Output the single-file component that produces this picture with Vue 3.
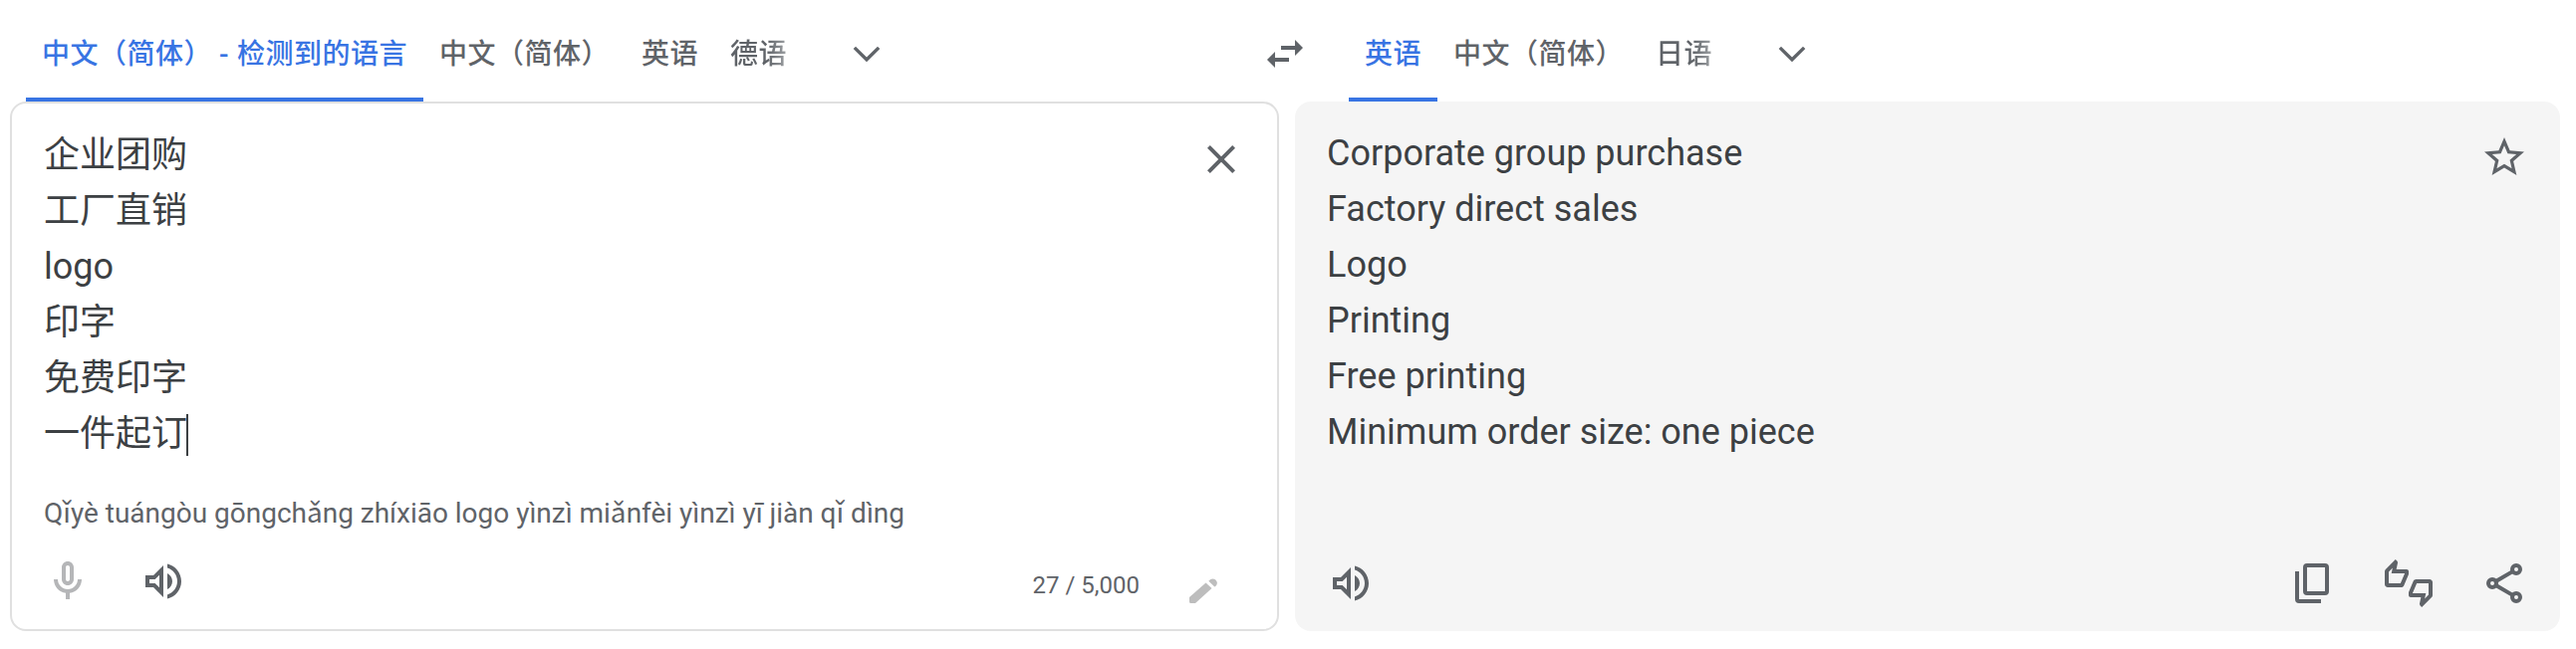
<template>
  <div class="translator">
    <header class="lang-bar">
      <div class="langs langs-source">
        <button class="tab detected active">中文（简体）<span class="dash">-</span>检测到的语言</button>
        <button class="tab tab-zh">中文（简体）</button>
        <button class="tab tab-en">英语</button>
        <button class="tab tab-last">德语</button>
        <svg class="chevron" viewBox="0 0 24 24"><path :d="icons.chevron" /></svg>
      </div>
      <svg class="icon swap" viewBox="0 0 24 24"><path :d="icons.swap" /></svg>
      <div class="langs langs-target">
        <button class="tab active target-en">英语</button>
        <button class="tab target-zh">中文（简体）</button>
        <button class="tab tab-last target-ja">日语</button>
        <svg class="chevron" viewBox="0 0 24 24"><path :d="icons.chevron" /></svg>
      </div>
    </header>

    <main class="panels">
      <section class="panel source">
        <div class="panel-top">
          <div class="lines">
            <p v-for="(line, i) in sourceLines" :key="i">
              {{ line }}<i v-if="i === sourceLines.length - 1" class="caret"></i>
            </p>
          </div>
          <svg class="icon close" viewBox="0 0 24 24"><path :d="icons.close" /></svg>
        </div>
        <p class="pinyin">{{ pinyin }}</p>
        <div class="toolbar">
          <svg class="icon mic" viewBox="0 0 24 24"><path :d="icons.mic" /></svg>
          <svg class="icon speaker" viewBox="0 0 24 24"><path :d="icons.volume" /></svg>
          <span class="counter">27 / 5,000</span>
          <svg class="pencil" viewBox="0 0 28 26">
            <path d="M0 19 16.5 4.5 22.5 10 6 25H1.5Q0 25 0 23.5Z" />
            <path d="M19.3 2.8Q22.5-1 26 1.3 29.5 4.5 26.5 7.8L25.3 8.5Z" />
          </svg>
        </div>
      </section>

      <section class="panel target">
        <div class="panel-top">
          <div class="lines">
            <p v-for="line in targetLines" :key="line">{{ line }}</p>
          </div>
          <svg class="icon star" viewBox="0 0 24 24"><path :d="icons.star" /></svg>
        </div>
        <div class="toolbar">
          <svg class="icon" viewBox="0 0 24 24"><path :d="icons.volume" /></svg>
          <svg class="icon copy" viewBox="0 0 24 24">
            <rect x="8" y="3" width="11" height="14" rx="1" />
            <path d="M4 6v14a1 1 0 0 0 1 1h11" />
          </svg>
          <svg class="icon thumbs" viewBox="0 0 24 24"><path :d="icons.thumbs" /></svg>
          <svg class="icon share" viewBox="0 0 24 24">
            <path d="M8 10.9 16 6.2M8 13.1 16 17.8" />
            <circle cx="18" cy="5" r="2" />
            <circle cx="6" cy="12" r="2" />
            <circle cx="18" cy="19" r="2" />
          </svg>
        </div>
      </section>
    </main>
  </div>
</template>

<script setup>
const sourceLines = ['企业团购', '工厂直销', 'logo', '印字', '免费印字', '一件起订']
const targetLines = [
  'Corporate group purchase',
  'Factory direct sales',
  'Logo',
  'Printing',
  'Free printing',
  'Minimum order size: one piece'
]
const pinyin = 'Qǐyè tuángòu gōngchǎng zhíxiāo logo yìnzì miǎnfèi yìnzì yī jiàn qǐ dìng'

const icons = {
  chevron: 'M5.41 7.59L4 9l8 8 8-8-1.41-1.41L12 14.17z',
  swap: 'M6.99 11L3 15l3.99 4v-3H14v-2H6.99v-3zM21 9l-3.99-4v3H10v2h7.01v3L21 9z',
  close: 'M19 6.41L17.59 5 12 10.59 6.41 5 5 6.41 10.59 12 5 17.59 6.41 19 12 13.41 17.59 19 19 17.59 13.41 12z',
  mic: 'M12 14c1.66 0 3-1.34 3-3V5c0-1.66-1.34-3-3-3S9 3.34 9 5v6c0 1.66 1.34 3 3 3zm-1-9c0-.55.45-1 1-1s1 .45 1 1v6c0 .55-.45 1-1 1s-1-.45-1-1V5zm6 6c0 2.76-2.24 5-5 5s-5-2.24-5-5H5c0 3.53 2.61 6.43 6 6.92V21h2v-3.08c3.39-.49 6-3.39 6-6.92h-2z',
  volume: 'M3 9v6h4l5 5V4L7 9H3zm7-.17v6.34L7.83 13H5v-2h2.83L10 8.83zM16.5 12c0-1.77-1.02-3.29-2.5-4.03v8.05c1.48-.73 2.5-2.25 2.5-4.02zM14 3.23v2.06c2.89.86 5 3.54 5 6.71s-2.11 5.85-5 6.71v2.06c4.01-.91 7-4.49 7-8.77s-2.99-7.86-7-8.77z',
  star: 'M22 9.24l-7.19-.62L12 2 9.19 8.63 2 9.24l5.46 4.73L5.82 21 12 17.27 18.18 21l-1.63-7.03L22 9.24zM12 15.4l-3.76 2.27 1-4.28-3.32-2.88 4.38-.38L12 6.1l1.71 4.04 4.38.38-3.32 2.88 1 4.28L12 15.4z',
  thumbs: 'M12 6c0-.55-.45-1-1-1H5.82l.66-3.18.02-.23c0-.31-.13-.59-.33-.8L5.38 0 .44 4.94C.17 5.21 0 5.59 0 6v6.5c0 .83.67 1.5 1.5 1.5h6.75c.62 0 1.15-.38 1.38-.91l2.26-5.29c.07-.17.11-.36.11-.55V6zm-2 1.13L7.92 12H2V6.21l1.93-1.93L3.36 7H10v.13zM22.5 10h-6.75c-.62 0-1.15.38-1.38.91l-2.26 5.29c-.07.17-.11.36-.11.55V18c0 .55.45 1 1 1h5.18l-.66 3.18-.02.24c0 .31.13.59.33.8l.79.78 4.94-4.94c.27-.27.44-.65.44-1.06v-6.5c0-.83-.67-1.5-1.5-1.5zm-.5 7.79l-1.93 1.93.57-2.72H14v-.13L16.08 12H22v5.79z'
}
</script>

<style>
body {
  margin: 0;
  background: #fff;
}
</style>

<style scoped>
.translator {
  box-sizing: border-box;
  width: 2586px;
  height: 652px;
  padding: 0 16px 18px 10px;
  font-family: Roboto, "Noto Sans CJK SC", sans-serif;
  color: #3c4043;
}
.lang-bar {
  display: flex;
  align-items: flex-start;
  height: 102px;
}
.langs {
  display: flex;
  align-items: flex-start;
}
.langs-source {
  box-sizing: border-box;
  width: 1256px;
  padding-left: 16px;
}
.tab {
  box-sizing: border-box;
  height: 102px;
  padding: 11px 0 0;
  border: 0;
  border-bottom: 4px solid transparent;
  background: none;
  font-family: inherit;
  font-size: 28px;
  font-weight: 500;
  letter-spacing: 0.5px;
  line-height: 87px;
  text-align: left;
  white-space: nowrap;
  color: #5f6368;
}
.tab.active {
  color: #3874e3;
  border-bottom-color: #3874e3;
}
.detected {
  width: 399px;
  padding-left: 16px;
}
.dash {
  display: inline-block;
  box-sizing: border-box;
  width: 25px;
  padding-left: 7px;
}
.tab-zh {
  width: 203px;
  padding-left: 16px;
}
.tab-en {
  width: 105px;
  padding-left: 16px;
}
.tab-last {
  width: 57px;
  color: transparent;
  background: linear-gradient(90deg, #5f6368 65%, #a0a3a6) text;
}
.chevron {
  width: 40px;
  height: 40px;
  margin: 34px 0 0 60px;
  fill: #5f6368;
}
.icon {
  flex: none;
  width: 48px;
  height: 48px;
  fill: #5f6368;
}
.swap {
  margin-top: 30px;
}
.langs-target {
  margin-left: 40px;
}
.target-en {
  width: 89px;
  padding-left: 16px;
}
.target-zh {
  width: 219px;
  padding-left: 16px;
}
.target-ja {
  width: 57px;
}
.panels {
  display: flex;
  gap: 16px;
  height: 532px;
}
.panel {
  box-sizing: border-box;
  display: flex;
  flex-direction: column;
  border-radius: 16px;
}
.source {
  width: 1274px;
  border: 2px solid #e0e0e0;
  padding: 24px 32px;
}
.target {
  width: 1270px;
  padding: 24px 32px;
  background: #f5f5f5;
}
.panel-top {
  display: flex;
  justify-content: space-between;
}
.lines p,
.pinyin {
  margin: 0;
}
.lines p {
  height: 56px;
  font-size: 36px;
  line-height: 56px;
  white-space: nowrap;
}
.caret {
  display: inline-block;
  width: 2px;
  height: 42px;
  margin-left: -1px;
  vertical-align: -10px;
  background: #3c4043;
}
.close,
.star {
  margin-top: 8px;
}
.pinyin {
  margin-top: 32px;
  height: 40px;
  font-size: 28px;
  letter-spacing: -0.01px;
  line-height: 40px;
  color: #5f6368;
}
.toolbar {
  display: flex;
  align-items: center;
  height: 48px;
  margin-top: auto;
}
.mic {
  fill: #b5b6b8;
}
.speaker {
  margin-left: 48px;
}
.counter {
  margin-left: auto;
  padding-top: 7px;
  font-size: 24px;
  color: #5f6368;
}
.pencil {
  width: 28px;
  height: 26px;
  margin: 19px 28px 0 50px;
  fill: #bdbdbd;
}
.copy {
  margin-left: auto;
  fill: none;
  stroke: #5f6368;
  stroke-width: 2;
}
.thumbs {
  margin: 0 48px;
}
.share {
  fill: none;
  stroke: #5f6368;
  stroke-width: 2;
}
</style>
